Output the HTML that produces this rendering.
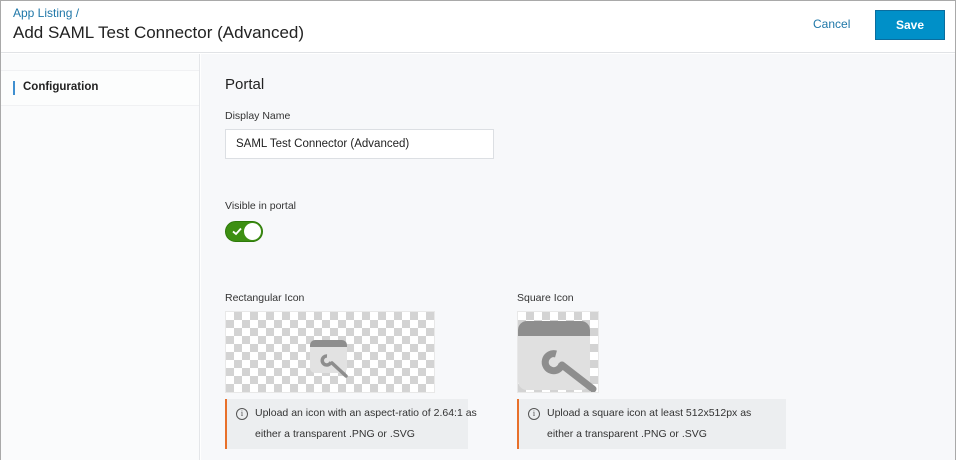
<!DOCTYPE html>
<html><head><style>
*{box-sizing:border-box;margin:0;padding:0}
body{width:956px;height:460px;overflow:hidden;font-family:"Liberation Sans",Arial,sans-serif;background:#fff;position:relative}
.frame{position:absolute;inset:0;border:1px solid #a9a9a9;border-bottom:none;}
.hdr{position:absolute;left:0;top:0;width:956px;height:53px;background:#fff;border-bottom:1px solid #e1e3e6}
.crumb{position:absolute;left:13px;top:6px;font-size:12px;color:#1f77a8}
.title{position:absolute;left:13px;top:23px;font-size:17px;color:#222}
.cancel{position:absolute;left:813px;top:17px;font-size:12px;color:#1f77a8}
.save{position:absolute;left:875px;top:10px;width:70px;height:30px;background:#0090c8;border:1px solid #0a6d9e;color:#fff;font-weight:bold;font-size:12px;text-align:center;line-height:28px}
.side{position:absolute;left:1px;top:54px;width:199px;height:406px;background:#fafbfc;border-right:1px solid #e4e6e9}
.side .item{position:absolute;left:0;top:16px;width:198px;height:36px;background:#fcfdfd;border-top:1px solid #f0f1f3;border-bottom:1px solid #f0f1f3}
.side .bar{position:absolute;left:12px;top:10px;width:2px;height:14px;background:#3f8fd0}
.side .lbl{position:absolute;left:22px;top:10px;font-size:11.5px;font-weight:bold;color:#222}
.main{position:absolute;left:201px;top:54px;width:754px;height:406px;background:#f7f8fa}
.h2{position:absolute;left:225px;top:76px;font-size:15px;color:#222}
.lab{position:absolute;font-size:10.5px;color:#333}
.inp{position:absolute;left:225px;top:129px;width:269px;height:30px;background:#fff;border:1px solid #dcdfe3;font-size:11.5px;color:#222;padding:8px 10px}
.tog{position:absolute;left:225px;top:221px;width:38px;height:21px;border-radius:11px;background:#3d8f12;border:1px solid #2e7a0a}
.tog .k{position:absolute;right:1px;top:1px;width:17px;height:17px;border-radius:50%;background:#fff}
.chk{position:absolute;background-color:#fff;background-image:linear-gradient(45deg,#d3d3d3 25%,transparent 25%,transparent 75%,#d3d3d3 75%),linear-gradient(45deg,#d3d3d3 25%,transparent 25%,transparent 75%,#d3d3d3 75%);background-size:16px 16px;background-position:0 0,8px 8px;border:1px solid #e8e8e8}
.info{position:absolute;height:50px;background:#eceef0;border-left:2px solid #e8702a;font-size:10.5px;color:#333;line-height:21px;padding:4px 0 0 28px;white-space:nowrap}
.info .i{position:absolute;left:9px;top:9px;width:12px;height:12px;border:1px solid #555;border-radius:50%;font-size:8px;line-height:10px;text-align:center;font-family:"Liberation Serif",serif;color:#444}
</style></head><body>
<div class="hdr">
<div class="crumb">App Listing /</div>
<div class="title">Add SAML Test Connector (Advanced)</div>
<div class="cancel">Cancel</div>
<div class="save">Save</div>
</div>
<div class="side"><div class="item"><div class="bar"></div><div class="lbl">Configuration</div></div></div>
<div class="main"></div>
<div class="h2">Portal</div>
<div class="lab" style="left:225px;top:110px">Display Name</div>
<div class="inp">SAML Test Connector (Advanced)</div>
<div class="lab" style="left:225px;top:200px">Visible in portal</div>
<div class="tog"><svg style="position:absolute;left:6px;top:5px" width="10" height="9"><path d="M1 4.5 L4 7 L9 1.5" stroke="#fff" stroke-width="1.8" fill="none"/></svg><div class="k"></div></div>
<div class="lab" style="left:225px;top:292px">Rectangular Icon</div>
<div class="lab" style="left:517px;top:292px">Square Icon</div>
<div class="chk" style="left:225px;top:311px;width:210px;height:82px"></div>
<div class="chk" style="left:517px;top:311px;width:82px;height:82px"></div>
<svg style="position:absolute;left:310px;top:340px" width="40" height="38" viewBox="0 0 40 38"><rect x="0" y="0" width="37" height="33" rx="5" fill="#e2e2e2"/><path d="M0 5 a5 5 0 0 1 5 -5 h27 a5 5 0 0 1 5 5 v2 h-37z" fill="#8e8e8e"/><path d="M17 16 a4.5 4.5 0 1 0 4 6" stroke="#8e8e8e" stroke-width="3.5" fill="none"/><path d="M22 23 l14 13" stroke="#8e8e8e" stroke-width="3.5" stroke-linecap="round"/></svg>
<svg style="position:absolute;left:518px;top:321px" width="81" height="71" viewBox="0 0 81 71"><rect x="0" y="0" width="72" height="69" rx="9" fill="#e0e0e0"/><path d="M0 9 a9 9 0 0 1 9 -9 h54 a9 9 0 0 1 9 9 v6 h-72z" fill="#8e8e8e"/><path d="M38 33 a8.5 8.5 0 1 0 6 10" stroke="#8e8e8e" stroke-width="7" fill="none"/><path d="M44 44 l31 24" stroke="#8e8e8e" stroke-width="7" stroke-linecap="round"/></svg>
<div class="info" style="left:225px;top:399px;width:243px"><div class="i">i</div>Upload an icon with an aspect-ratio of 2.64:1 as<br>either a transparent .PNG or .SVG</div>
<div class="info" style="left:517px;top:399px;width:269px"><div class="i">i</div>Upload a square icon at least 512x512px as<br>either a transparent .PNG or .SVG</div>
<div class="frame"></div>
</body></html>
